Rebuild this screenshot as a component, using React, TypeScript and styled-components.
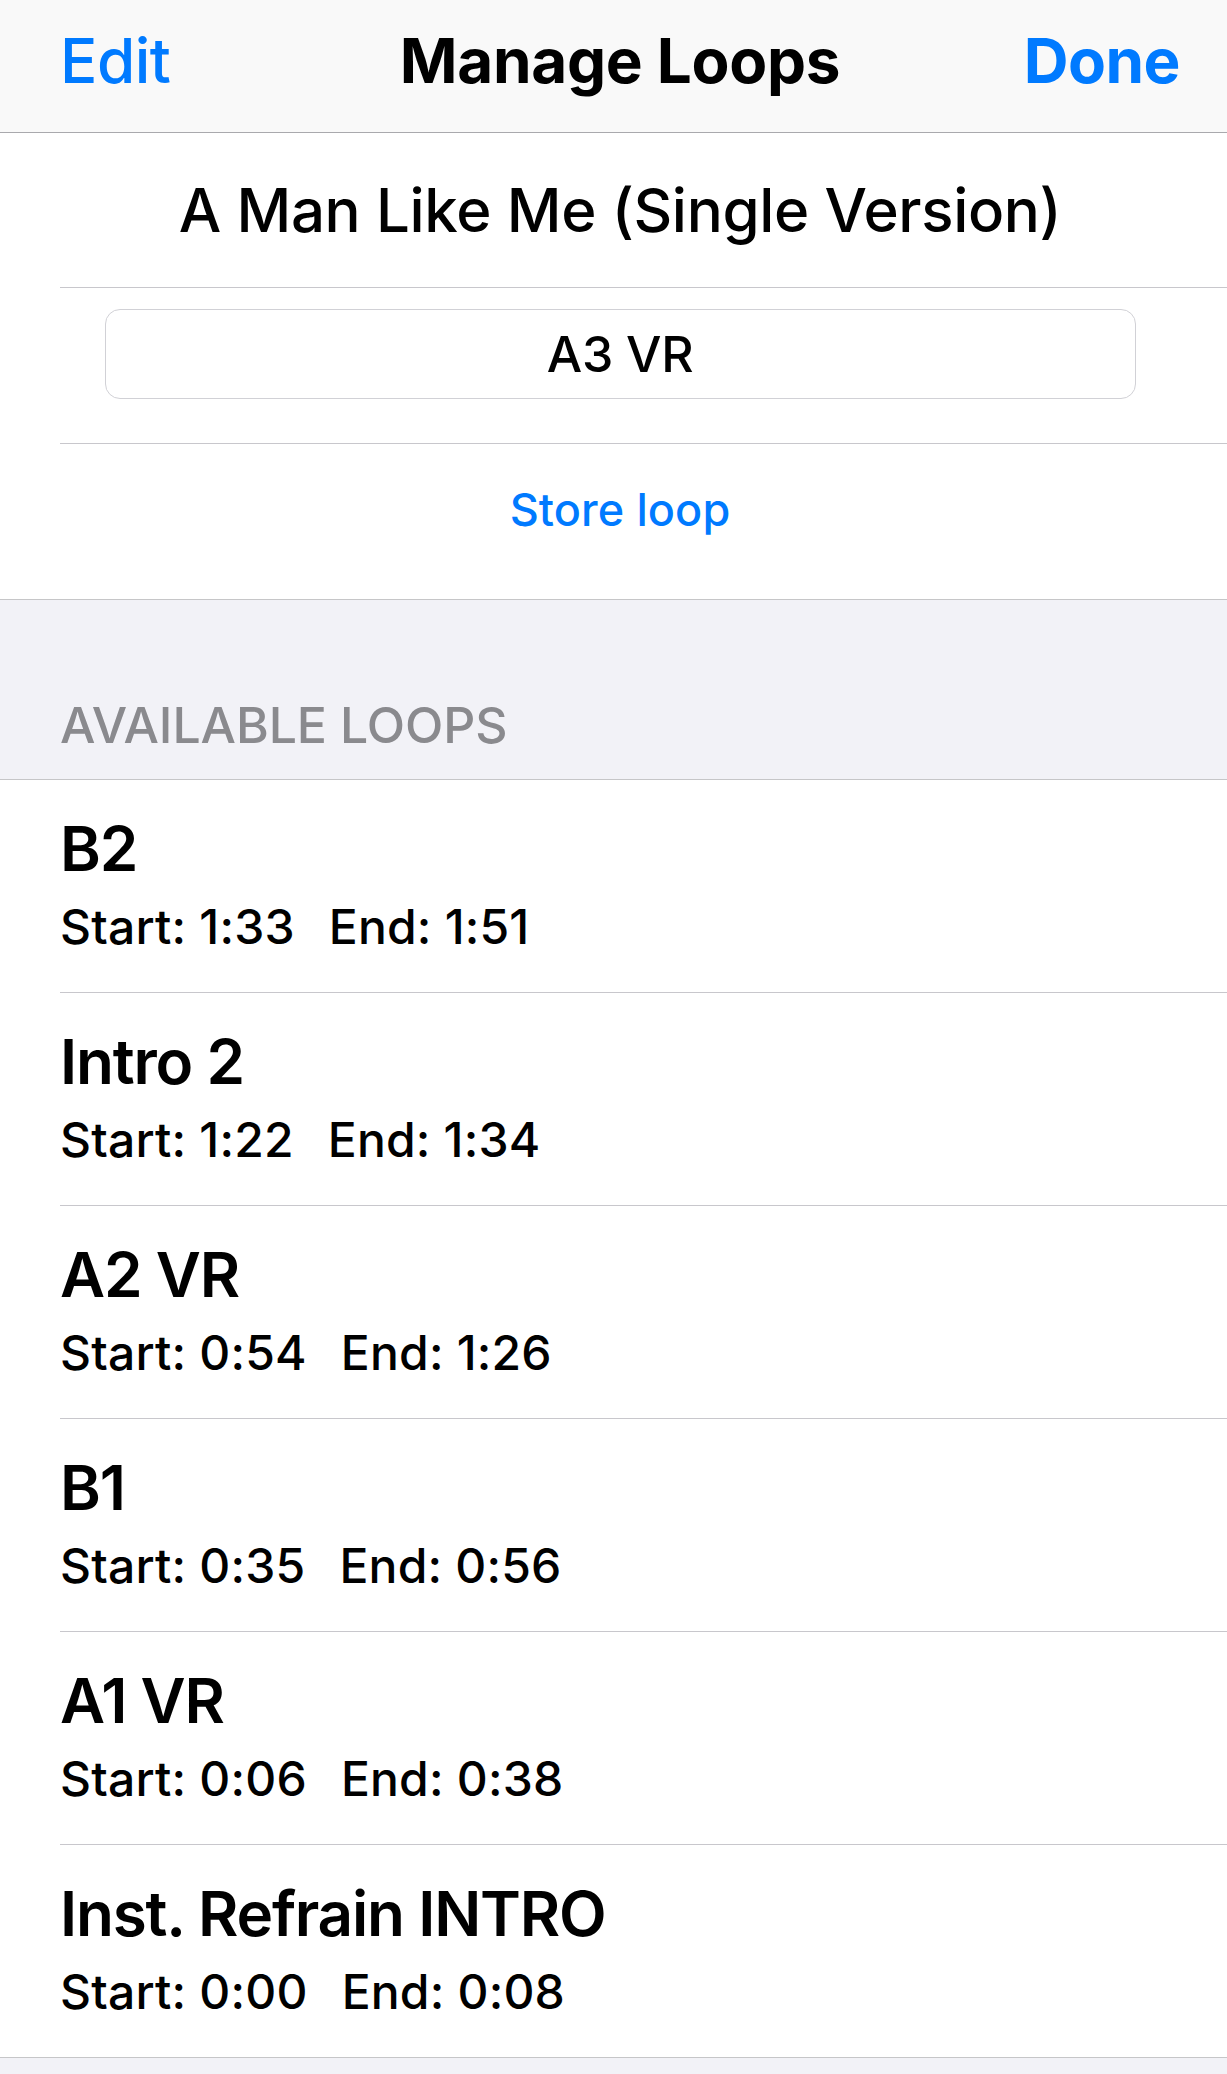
import React from "react";
import styled, { createGlobalStyle } from "styled-components";

const GlobalStyle = createGlobalStyle`
  html, body {
    margin: 0;
    padding: 0;
    background: #f2f2f7;
  }
  body {
    font-family: Inter, "Noto Sans", "Liberation Sans", sans-serif;
    color: #000;
    -webkit-font-smoothing: antialiased;
  }
  * { box-sizing: border-box; }
`;

const Page = styled.div`
  width: 1227px;
  min-height: 2074px;
  background: #f2f2f7;
`;

const NavBar = styled.header`
  display: grid;
  grid-template-columns: 1fr auto 1fr;
  align-items: start;
  height: 133px;
  padding: 30px 47px 0 60px;
  background: #f9f9f9;
  border-bottom: 1px solid #a9a9ad;
`;

const NavButton = styled.button<{ $align: "left" | "right"; $strong?: boolean }>`
  justify-self: ${(p) => (p.$align === "left" ? "start" : "end")};
  background: none;
  border: 0;
  padding: 0;
  margin: 0;
  font-family: inherit;
  font-size: 62px;
  line-height: 62px;
  font-weight: ${(p) => (p.$strong ? 700 : 500)};
  letter-spacing: -0.5px;
  color: #007aff;
`;

const NavTitle = styled.h1`
  margin: 0;
  font-size: 62px;
  line-height: 62px;
  font-weight: 700;
  letter-spacing: -0.3px;
  color: #000;
`;

const Group = styled.section`
  background: #fff;
  padding-left: 60px;
  border-bottom: 1px solid #c6c6c8;
`;

const Cell = styled.div<{ $divider?: boolean; $height: number; $padTop: number }>`
  display: flex;
  flex-direction: column;
  align-items: center;
  height: ${(p) => p.$height}px;
  padding-top: ${(p) => p.$padTop}px;
  padding-right: 47px;
  border-bottom: ${(p) => (p.$divider ? "1px solid #c8c7cc" : "none")};
`;

const SongTitle = styled.div`
  font-size: 60px;
  line-height: 60px;
  font-weight: 500;
  letter-spacing: -0.35px;
  white-space: nowrap;
`;

const NameField = styled.div`
  width: 100%;
  margin: 0 45px;
  max-width: 1031px;
  height: 90px;
  display: flex;
  align-items: center;
  justify-content: center;
  border: 1.5px solid #d1d1d6;
  border-radius: 15px;
  background: #fff;
`;

const FieldText = styled.span`
  font-size: 50px;
  line-height: 50px;
  font-weight: 500;
  letter-spacing: -0.3px;
`;

const StoreButton = styled.button`
  background: none;
  border: 0;
  padding: 0;
  margin: 0;
  font-family: inherit;
  font-size: 45px;
  line-height: 44px;
  font-weight: 500;
  letter-spacing: 0.1px;
  color: #007aff;
`;

const SectionHeader = styled.div`
  height: 180px;
  padding: 100px 0 0 60px;
  font-size: 50px;
  line-height: 50px;
  font-weight: 500;
  color: #8a8a8e;
  letter-spacing: -0.1px;
  background: #f2f2f7;
  border-bottom: 1px solid #c6c6c8;
`;

const LoopList = styled.ul`
  list-style: none;
  margin: 0;
  padding: 0 0 0 60px;
  background: #fff;
  border-bottom: 1px solid #c6c6c8;
`;

const LoopRow = styled.li<{ $last?: boolean }>`
  height: ${(p) => (p.$last ? 212 : 213)}px;
  padding-top: 38px;
  border-bottom: ${(p) => (p.$last ? "none" : "1px solid #c8c7cc")};
`;

const LoopName = styled.div`
  font-size: 62px;
  line-height: 62px;
  font-weight: 600;
  letter-spacing: -1.2px;
  white-space: nowrap;
`;

const LoopTimes = styled.div`
  display: flex;
  gap: 34px;
  margin-top: 21px;
  font-size: 48px;
  line-height: 52px;
  font-weight: 500;
  letter-spacing: 0.2px;
  white-space: nowrap;
`;

const loops = [
  { name: "B2", start: "1:33", end: "1:51" },
  { name: "Intro 2", start: "1:22", end: "1:34" },
  { name: "A2 VR", start: "0:54", end: "1:26" },
  { name: "B1", start: "0:35", end: "0:56" },
  { name: "A1 VR", start: "0:06", end: "0:38" },
  { name: "Inst. Refrain INTRO", start: "0:00", end: "0:08" },
];

export default function App() {
  return (
    <Page>
      <GlobalStyle />
      <NavBar>
        <NavButton $align="left">Edit</NavButton>
        <NavTitle>Manage Loops</NavTitle>
        <NavButton $align="right" $strong>
          Done
        </NavButton>
      </NavBar>

      <Group>
        <Cell $divider $height={155} $padTop={47}>
          <SongTitle>A Man Like Me (Single Version)</SongTitle>
        </Cell>
        <Cell $divider $height={156} $padTop={21}>
          <NameField>
            <FieldText>A3 VR</FieldText>
          </NameField>
        </Cell>
        <Cell $height={155} $padTop={44}>
          <StoreButton>Store loop</StoreButton>
        </Cell>
      </Group>

      <SectionHeader>AVAILABLE LOOPS</SectionHeader>

      <LoopList>
        {loops.map((l, i) => (
          <LoopRow key={l.name} $last={i === loops.length - 1}>
            <LoopName>{l.name}</LoopName>
            <LoopTimes>
              <span>Start: {l.start}</span>
              <span>End: {l.end}</span>
            </LoopTimes>
          </LoopRow>
        ))}
      </LoopList>
    </Page>
  );
}
